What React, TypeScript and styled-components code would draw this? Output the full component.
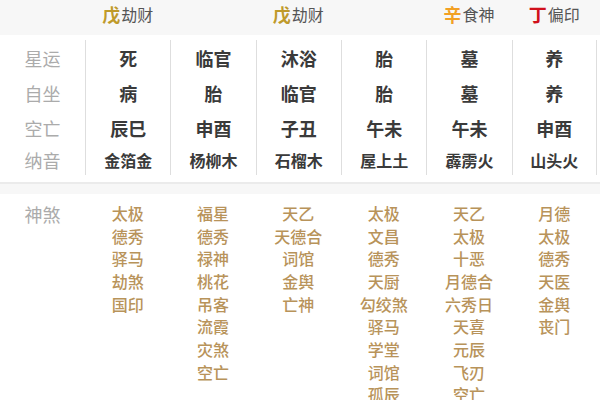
import React from "react";
import styled, { createGlobalStyle } from "styled-components";

const Global = createGlobalStyle`
  html, body { margin: 0; padding: 0; background: #ffffff; }
  body { font-family: "Noto Sans CJK SC", "Noto Sans", sans-serif; }
`;

const COLS = "85px repeat(6, 85.33px)";

const Page = styled.div`
  width: 600px;
  height: 400px;
  overflow: hidden;
  background: #ffffff;
`;

const Header = styled.div`
  display: grid;
  grid-template-columns: ${COLS};
  height: 35px;
  background: #f7f7f7;
`;

const HeadCell = styled.div`
  display: flex;
  align-items: center;
  justify-content: center;
  padding-bottom: 7px;
  box-sizing: border-box;
`;

const Stem = styled.span<{ $color: string }>`
  font-size: 18px;
  font-weight: 700;
  color: ${(p) => p.$color};
  line-height: 1;
`;

const God = styled.span`
  font-size: 16px;
  color: #555555;
  line-height: 1;
  margin-left: 1px;
`;

const Body = styled.div`
  display: grid;
  grid-template-columns: ${COLS};
  padding: 5px 0 7px;
  border-bottom: 2px solid #ebebeb;
`;

const Column = styled.div<{ $divider?: boolean; $last?: boolean }>`
  display: flex;
  flex-direction: column;
  border-left: ${(p) => (p.$divider ? "1px solid #dedede" : "none")};
  border-right: ${(p) => (p.$last ? "1px solid #dedede" : "none")};
`;

const Cell = styled.div<{ $h: number; $size: number; $label?: boolean }>`
  height: ${(p) => p.$h}px;
  display: flex;
  align-items: center;
  justify-content: center;
  font-size: ${(p) => p.$size}px;
  font-weight: ${(p) => (p.$label ? 400 : 700)};
  color: ${(p) => (p.$label ? "#ababab" : "#3a3a3a")};
  line-height: 1;
`;

const Band = styled.div`
  height: 10px;
  background: #f7f7f7;
`;

const Shensha = styled.div`
  display: grid;
  grid-template-columns: ${COLS};
  padding-top: 8px;
`;

const ShLabel = styled.div`
  text-align: center;
  font-size: 18px;
  color: #ababab;
  line-height: 24px;
`;

const ShList = styled.div`
  display: flex;
  flex-direction: column;
  align-items: center;
`;

const ShItem = styled.div`
  font-size: 16px;
  font-weight: 500;
  color: #b8935a;
  line-height: 22.65px;
  white-space: nowrap;
`;

const heads: ({ stem: string; color: string; god: string } | null)[] = [
  { stem: "戊", color: "#bf9a2a", god: "劫财" },
  null,
  { stem: "戊", color: "#bf9a2a", god: "劫财" },
  null,
  { stem: "辛", color: "#f2a024", god: "食神" },
  { stem: "丁", color: "#d0101b", god: "偏印" },
];

const labels = ["星运", "自坐", "空亡", "纳音"];
const rowH = [35, 35, 35, 30];
const rowSize = [18, 18, 18, 16];

const data = [
  ["死", "病", "辰巳", "金箔金"],
  ["临官", "胎", "申酉", "杨柳木"],
  ["沐浴", "临官", "子丑", "石榴木"],
  ["胎", "胎", "午未", "屋上土"],
  ["墓", "墓", "午未", "霹雳火"],
  ["养", "养", "申酉", "山头火"],
];

const shensha = [
  ["太极", "德秀", "驿马", "劫煞", "国印"],
  ["福星", "德秀", "禄神", "桃花", "吊客", "流霞", "灾煞", "空亡"],
  ["天乙", "天德合", "词馆", "金舆", "亡神"],
  ["太极", "文昌", "德秀", "天厨", "勾绞煞", "驿马", "学堂", "词馆", "孤辰"],
  ["天乙", "太极", "十恶", "月德合", "六秀日", "天喜", "元辰", "飞刃", "空亡"],
  ["月德", "太极", "德秀", "天医", "金舆", "丧门"],
];

export default function App() {
  return (
    <Page>
      <Global />
      <Header>
        <HeadCell />
        {heads.map((h, i) => (
          <HeadCell key={i}>
            {h && (
              <>
                <Stem $color={h.color}>{h.stem}</Stem>
                <God>{h.god}</God>
              </>
            )}
          </HeadCell>
        ))}
      </Header>
      <Body>
        <Column>
          {labels.map((l, i) => (
            <Cell key={l} $h={rowH[i]} $size={18} $label>
              {l}
            </Cell>
          ))}
        </Column>
        {data.map((col, ci) => (
          <Column key={ci} $divider $last={ci === data.length - 1}>
            {col.map((v, ri) => (
              <Cell key={ri} $h={rowH[ri]} $size={rowSize[ri]}>
                {v}
              </Cell>
            ))}
          </Column>
        ))}
      </Body>
      <Band />
      <Shensha>
        <ShLabel>神煞</ShLabel>
        {shensha.map((col, ci) => (
          <ShList key={ci}>
            {col.map((s, si) => (
              <ShItem key={si}>{s}</ShItem>
            ))}
          </ShList>
        ))}
      </Shensha>
    </Page>
  );
}
